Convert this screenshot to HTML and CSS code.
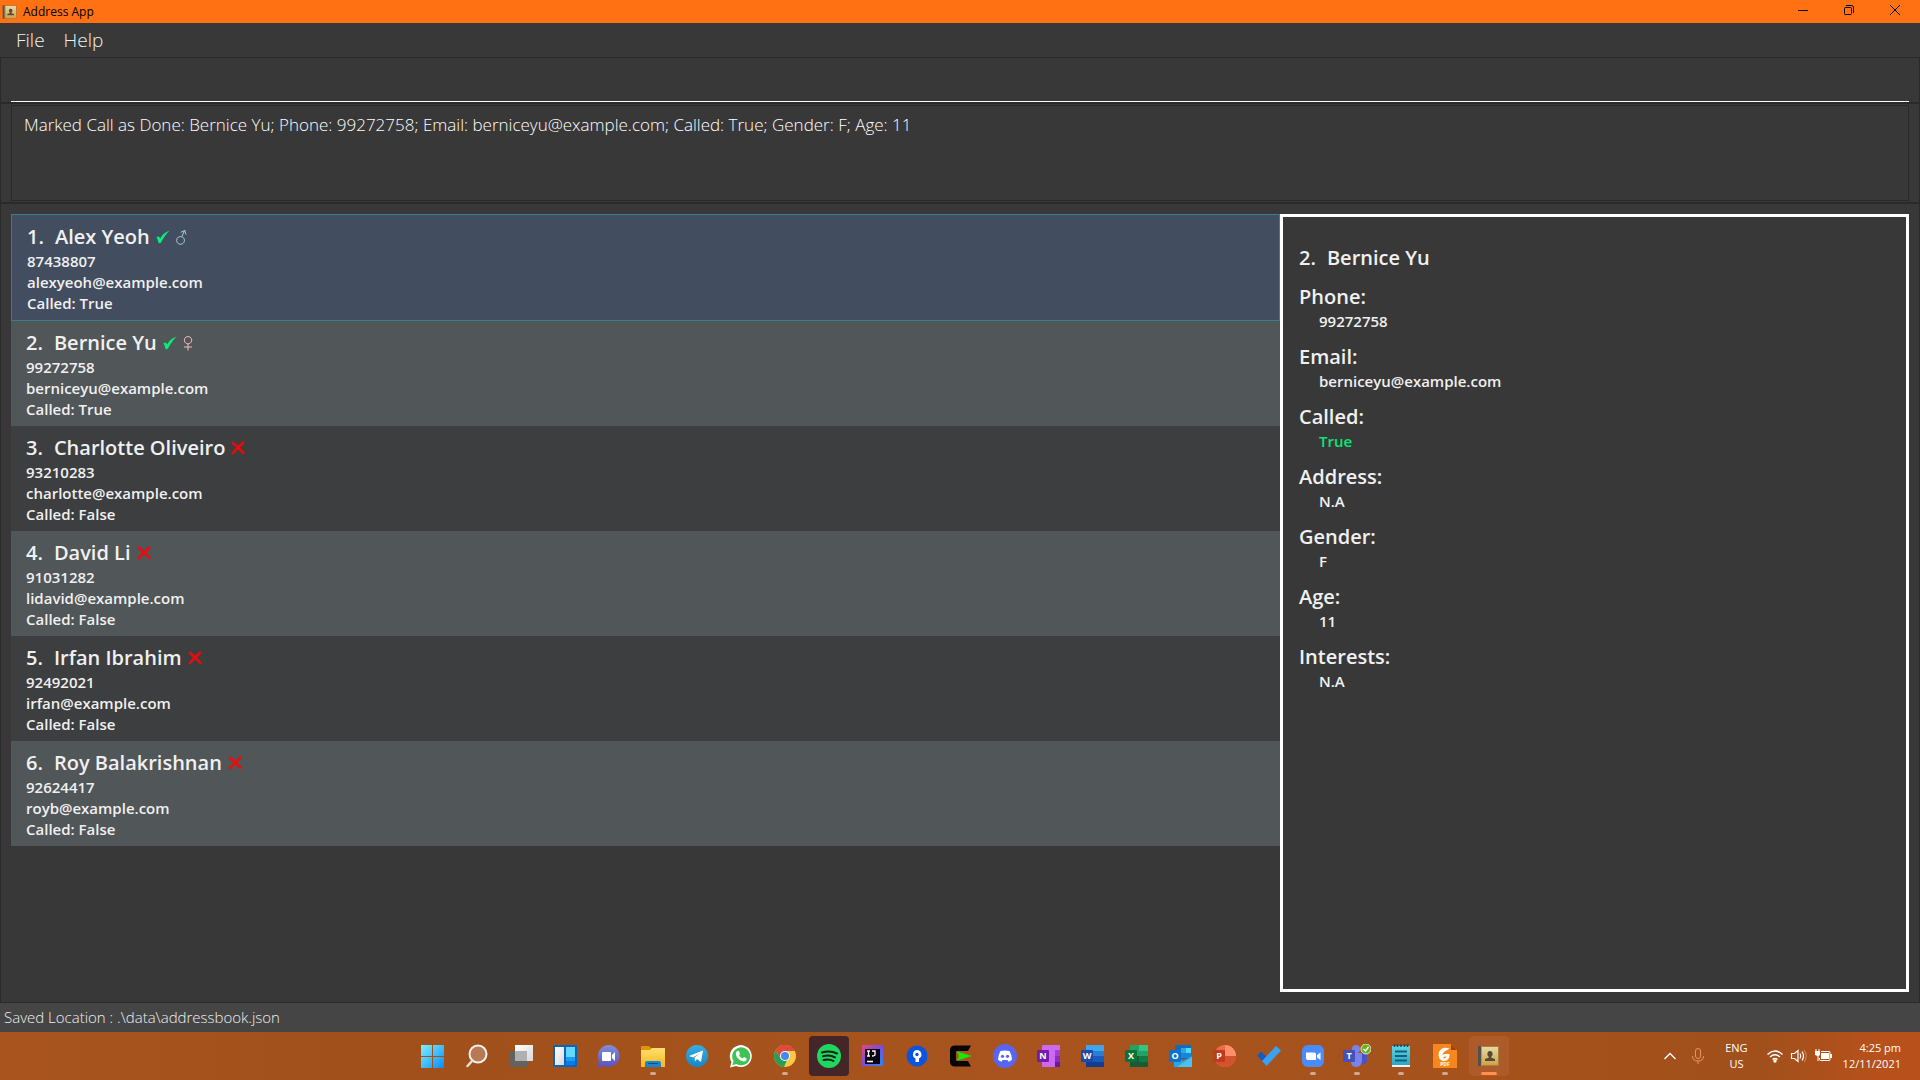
FILE: index.html
```html
<!DOCTYPE html>
<html lang="en">
<head>
<meta charset="utf-8">
<meta name="viewport" content="width=device-width, initial-scale=1">
<title>Address App</title>
<link rel="stylesheet" href="styles.css">
</head>
<body>
<svg class="defs" aria-hidden="true">
  <defs>
    <linearGradient id="win" x2="1" y2="1"><stop stop-color="#7df0ff"/><stop offset="1" stop-color="#0a8cf5"/></linearGradient>
    <linearGradient id="chat" x2="0" y2="1"><stop stop-color="#7f8fd8"/><stop offset="1" stop-color="#5b4fc0"/></linearGradient>
    <linearGradient id="folder" x2="0" y2="1"><stop stop-color="#ffdf70"/><stop offset="1" stop-color="#f8b81c"/></linearGradient>
    <linearGradient id="tele" x2="0" y2="1"><stop stop-color="#37aee2"/><stop offset="1" stop-color="#1688c4"/></linearGradient>
    <linearGradient id="front" x2="1" y2="1"><stop stop-color="#fff"/><stop offset="1" stop-color="#d8d8d8"/></linearGradient>
    <linearGradient id="book" x2="0" y2="1"><stop stop-color="#e8d7a4"/><stop offset="1" stop-color="#d0a248"/></linearGradient>
    <linearGradient id="ij" x2="1" y2="1"><stop stop-color="#e8447c"/><stop offset=".5" stop-color="#7a4de0"/><stop offset="1" stop-color="#1f8cf5"/></linearGradient>
    <linearGradient id="pad" x2="0" y2="1"><stop stop-color="#5fd6e4"/><stop offset="1" stop-color="#2aa6c4"/></linearGradient>
    <symbol id="icon-book" viewBox="0 0 24 24"><path d="M3 2h19v20H3z" fill="#a5803a"/><path d="M5 3h16v18H5z" fill="url(#book)"/><path d="M1 2h3v20H1z" fill="#55504a"/><path d="M4 2h1v20H4z" fill="#9b978c"/><path d="M13 7c1.700 0 2.600 1.200 2.600 3 0 1.300-.6 2.200-1.300 2.700v1l3.700 1.300v2H8v-2l3.700-1.300v-1c-.7-.5-1.300-1.400-1.300-2.700 0-1.800.9-3 2.600-3z" fill="#54493a"/></symbol>
    <symbol id="icon-tick" viewBox="0 0 14 14"><path d="M.5 7.500C1.800 6 3.400 6.400 4.200 8.600 6 5 9 2 13.500.5 10 4 7.300 8 5 12.600c-.9.800-2 .700-2.600 0C2 10.500 1.400 8.700.5 7.500z" fill="#08ee7c"/></symbol>
    <symbol id="icon-cross" viewBox="0 0 14 14"><path d="M1 1.200C5 4 9 8 13 12.600M13 1C9 4.500 5 8.500 1 13" fill="none" stroke="#f20808" stroke-width="2.400"/></symbol>
    <symbol id="icon-male" viewBox="0 0 12 16"><path d="M5.500 7.500a3.900 3.900 0 1 0 .1 0zM6.800 7.600 9.600 1.500M5.800 3.300 9.800 1.400 11 5.500" fill="none" stroke="#a9cdd6"/></symbol>
    <symbol id="icon-female" viewBox="0 0 12 16"><path d="M6 1.500a3.700 3.700 0 1 0 .1 0zM6 9v6.500M2 12h8" fill="none" stroke="#f3b9c2"/></symbol>
  </defs>
</svg>

<header class="titlebar">
  <svg class="app-icon" aria-hidden="true"><use href="#icon-book"/></svg>
  <h1 class="window-title">Address App</h1>
  <div class="window-controls">
    <button class="window-button" aria-label="Minimize"><svg width="12" height="12" viewBox="0 0 12 12"><path d="M1 6.500h10" stroke="#000"/></svg></button>
    <button class="window-button" aria-label="Restore"><svg width="12" height="12" viewBox="0 0 12 12"><rect x="1.500" y="3.500" width="7" height="7" rx="1" fill="none" stroke="#000"/><path d="M3 1.500h5.500a2 2 0 0 1 2 2V9" fill="none" stroke="#000"/></svg></button>
    <button class="window-button" aria-label="Close"><svg width="12" height="12" viewBox="0 0 12 12"><path d="M1 1l10 10M11 1 1 11" stroke="#000"/></svg></button>
  </div>
</header>

<nav class="menubar" aria-label="Main menu">
  <button class="menu-item">File</button>
  <button class="menu-item">Help</button>
</nav>

<form class="pane command-pane">
  <input class="command-box" type="text" aria-label="Command">
</form>

<section class="pane result-pane">
  <output class="result">Marked Call as Done: Bernice Yu; Phone: 99272758; Email: berniceyu@example.com; Called: True; Gender: F; Age: 11</output>
</section>

<main class="pane content">
  <ul class="people">
    <li class="person selected">
      <h2 class="name"><span class="index">1.</span>Alex Yeoh<svg class="mark" role="img" aria-label="Called"><use href="#icon-tick"/></svg><svg class="sex" role="img" aria-label="Male"><use href="#icon-male"/></svg></h2>
      <p>87438807</p><p>alexyeoh@example.com</p><p>Called: True</p>
    </li>
    <li class="person">
      <h2 class="name"><span class="index">2.</span>Bernice Yu<svg class="mark" role="img" aria-label="Called"><use href="#icon-tick"/></svg><svg class="sex" role="img" aria-label="Female"><use href="#icon-female"/></svg></h2>
      <p>99272758</p><p>berniceyu@example.com</p><p>Called: True</p>
    </li>
    <li class="person">
      <h2 class="name"><span class="index">3.</span>Charlotte Oliveiro<svg class="mark" role="img" aria-label="Not called"><use href="#icon-cross"/></svg></h2>
      <p>93210283</p><p>charlotte@example.com</p><p>Called: False</p>
    </li>
    <li class="person">
      <h2 class="name"><span class="index">4.</span>David Li<svg class="mark" role="img" aria-label="Not called"><use href="#icon-cross"/></svg></h2>
      <p>91031282</p><p>lidavid@example.com</p><p>Called: False</p>
    </li>
    <li class="person">
      <h2 class="name"><span class="index">5.</span>Irfan Ibrahim<svg class="mark" role="img" aria-label="Not called"><use href="#icon-cross"/></svg></h2>
      <p>92492021</p><p>irfan@example.com</p><p>Called: False</p>
    </li>
    <li class="person">
      <h2 class="name"><span class="index">6.</span>Roy Balakrishnan<svg class="mark" role="img" aria-label="Not called"><use href="#icon-cross"/></svg></h2>
      <p>92624417</p><p>royb@example.com</p><p>Called: False</p>
    </li>
  </ul>
  <article class="details">
    <h2 class="name"><span class="index">2.</span>Bernice Yu</h2>
    <dl class="fields">
      <div><dt>Phone:</dt><dd>99272758</dd></div>
      <div><dt>Email:</dt><dd>berniceyu@example.com</dd></div>
      <div><dt>Called:</dt><dd class="yes">True</dd></div>
      <div><dt>Address:</dt><dd>N.A</dd></div>
      <div><dt>Gender:</dt><dd>F</dd></div>
      <div><dt>Age:</dt><dd>11</dd></div>
      <div><dt>Interests:</dt><dd>N.A</dd></div>
    </dl>
  </article>
</main>

<div class="statusbar">Saved Location : .\data\addressbook.json</div>

<footer class="taskbar">
  <div class="apps">
    <button class="app" aria-label="Start"><svg viewBox="0 0 24 24"><path d="M0 1h11v11H0zM12 1h11v11H12zM0 13h11v11H0zM12 13h11v11H12z" fill="url(#win)"/></svg></button>
    <button class="app" aria-label="Search"><svg viewBox="0 0 24 24"><circle cx="13" cy="10" r="8.500" fill="#b87955" stroke="#f3f1f0" stroke-width="2"/><path d="M7.500 16.500 2.500 22" stroke="#e5dfdc" stroke-width="2.500" stroke-linecap="round"/></svg></button>
    <button class="app" aria-label="Task View"><svg viewBox="0 0 24 24"><path d="M6 1h18v16H6z" fill="url(#front)"/><path d="M0 7h18v16H0z" fill="#626262"/><path d="M6 7h12v10H6z" fill="#b0b0b0"/></svg></button>
    <button class="app" aria-label="Widgets"><svg viewBox="0 0 24 24"><rect y="1" width="24" height="22" rx="1" fill="#0a64bd"/><path d="M2 3h9v18H2z" fill="url(#front)"/><path d="M13 3h9v10h-9z" fill="#63d8ff"/><path d="M13 13h9v4h-9z" fill="#1b9df4"/><path d="M13 17h9v4h-9z" fill="#0a7de8"/></svg></button>
    <button class="app" aria-label="Chat"><svg viewBox="0 0 24 24"><path d="M12 1a11 11 0 1 1-5 21L.5 23.500 2 17A11 11 0 0 1 12 1z" fill="url(#chat)"/><rect x="5" y="8" width="9" height="9" rx="1" fill="#fff"/><path d="M15 11l3-3v9l-3-3z" fill="#fff"/></svg></button>
    <button class="app running" aria-label="File Explorer"><svg viewBox="0 0 24 24"><path d="M0 3q0-1 1-1h7l3 3v6H0z" fill="#d99808"/><path d="M0 6h9l2-2h13v19H0z" fill="url(#folder)"/><path d="M4 23v-4q0-2 2-2h12q2 0 2 2v4z" fill="#1786d0"/><path d="M7 19.500h10" stroke="#0a4a90"/></svg></button>
    <button class="app" aria-label="Telegram"><svg viewBox="0 0 24 24"><circle cx="12" cy="12" r="11" fill="url(#tele)"/><path d="M4 12 18 6.500 16 18l-4-3-2 2.500-.5-4L15 9l-7 4.500z" fill="#fff"/></svg></button>
    <button class="app" aria-label="WhatsApp"><svg viewBox="0 0 24 24"><path d="M1 23.500 2.500 18A11 11 0 1 1 7 22z" fill="#fff"/><path d="M3.300 21.200 4.500 17A9 9 0 1 1 7.500 20z" fill="#3fc254"/><path d="M8 7h2l1 3-1 1.200q1.500 2.500 3.500 3.200L15 13l2.700 1.400q0 3-3.200 3Q8 16 6.800 10 7 8 8 7z" fill="#fff"/></svg></button>
    <button class="app running" aria-label="Chrome"><svg viewBox="0 0 24 24"><circle cx="12" cy="12" r="11" fill="#fcc944"/><path d="M2.500 6.500A11 11 0 0 1 22 7H12l-4 8z" fill="#de4b3d"/><path d="M2.500 6.500 8 15l6 1-3 7A11 11 0 0 1 2.500 6.500z" fill="#27a055"/><circle cx="12" cy="12" r="5" fill="#fff"/><circle cx="12" cy="12" r="4" fill="#4587f3"/></svg></button>
    <button class="app open" aria-label="Spotify"><svg viewBox="0 0 24 24"><circle cx="12" cy="12" r="12" fill="#1ed760"/><path d="M5 8.500q8-2.500 15 1M6 12.300q6.500-2 12 1M6.500 16q5.500-1.500 10 1" fill="none" stroke="#172018" stroke-width="2" stroke-linecap="round"/></svg></button>
    <button class="app" aria-label="IntelliJ IDEA"><svg viewBox="0 0 24 24"><path d="M1 1h21v21H1z" fill="url(#ij)"/><path d="M4 5h15v15H4z" fill="#0b0310"/><path d="M6 7h3M7.500 7v5M6 12h3M11 7h3v3.500q0 1.500-3 1.500M6 17.500h6" fill="none" stroke="#fff" stroke-width="1.300"/></svg></button>
    <button class="app" aria-label="Sourcetree"><svg viewBox="0 0 24 24"><circle cx="12" cy="12" r="10.500" fill="#0a54e0"/><path d="M12 6a4.500 4.500 0 0 1 2 8.500V18h-3.500v-3.500A4.500 4.500 0 0 1 12 6z" fill="#fff"/><circle cx="12" cy="10.500" r="1.700" fill="#0a54e0"/></svg></button>
    <button class="app" aria-label="Cmd"><svg viewBox="0 0 24 24"><path d="M22 1.500 19 7H8q-1 0-1 1v8q0 1 1 1h11l3 5.500H6q-5 0-5-5V6.500q0-5 5-5z" fill="#070707"/><path d="M8 7.500 23 12 8 16.500 10 12z" fill="#16e80c"/></svg></button>
    <button class="app" aria-label="Discord"><svg viewBox="0 0 24 24"><circle cx="12" cy="12" r="12" fill="#5865f2"/><path d="M7.500 7Q12 5.800 16.500 7 19 11 19 16l-3.500 1.800-1-1.800h-5l-1 1.800L5 16q0-5 2.500-9z" fill="#fff"/><circle cx="9.500" cy="12.300" r="1.600" fill="#5865f2"/><circle cx="14.500" cy="12.300" r="1.600" fill="#5865f2"/></svg></button>
    <button class="app" aria-label="OneNote"><svg viewBox="0 0 24 24"><rect x="5" y="1" width="18" height="22" rx="1" fill="#cb6af0"/><path d="M18 6h5v6h-5z" fill="#a93bd6"/><path d="M18 12h5v6h-5z" fill="#8a2dbd"/><path d="M18 18h5v5h-5z" fill="#6d18a0"/><rect y="6" width="12" height="12" rx="1" fill="#7719aa"/><text x="6" y="15" class="letter">N</text></svg></button>
    <button class="app" aria-label="Word"><svg viewBox="0 0 24 24"><path d="M5 1h18v6H5z" fill="#41a5ee"/><path d="M5 7h18v5H5z" fill="#2b7cd3"/><path d="M5 12h18v6H5z" fill="#185abd"/><path d="M5 18h18v5H5z" fill="#103f91"/><rect y="6" width="12" height="12" rx="1" fill="#164cab"/><text x="6" y="15" class="letter">W</text></svg></button>
    <button class="app" aria-label="Excel"><svg viewBox="0 0 24 24"><path d="M5 1h9v11H5z" fill="#21a366"/><path d="M14 1h9v6h-9z" fill="#33c481"/><path d="M14 7h9v5h-9z" fill="#21a366"/><path d="M5 12h18v11H5z" fill="#185c37"/><path d="M14 12h9v6h-9z" fill="#107c41"/><rect y="6" width="12" height="12" rx="1" fill="#0f7038"/><text x="6" y="15" class="letter">X</text></svg></button>
    <button class="app" aria-label="Outlook"><svg viewBox="0 0 24 24"><path d="M6 1h16v14H6z" fill="#0a6fc0"/><path d="M12 4h5v5h-5z" fill="#2fa4ee"/><path d="M17 4h5v5h-5z" fill="#50d9ff"/><path d="M12 9h10v5H12z" fill="#1488d8"/><path d="M5 12 14 17 23 12v11H5z" fill="#28a8ea"/><path d="M8 23 23 13v10z" fill="#49c1f4"/><rect y="6" width="12" height="12" rx="1" fill="#0a72c8"/><text x="6" y="15" class="letter">O</text></svg></button>
    <button class="app" aria-label="PowerPoint"><svg viewBox="0 0 24 24"><circle cx="12" cy="12" r="11" fill="#ed6c47"/><path d="M12 1a11 11 0 0 1 11 11H12z" fill="#ff8f6b"/><path d="M1 12h22a11 11 0 0 1-22 0z" fill="#d35230"/><rect y="6" width="12" height="12" rx="1" fill="#c03b1c"/><text x="6" y="15" class="letter">P</text></svg></button>
    <button class="app" aria-label="To Do"><svg viewBox="0 0 24 24"><path d="M0 11.500 4 7.500 12 15l-4 5z" fill="#195abd"/><path d="M5 17 19 2l5 4.500L9.500 22z" fill="#3ba0f0"/></svg></button>
    <button class="app running" aria-label="Zoom"><svg viewBox="0 0 24 24"><rect x="1" y="1" width="22" height="22" rx="6" fill="#4a8cff"/><path d="M5 8.500h8q2 0 2 2V16H7q-2 0-2-2zM16 11l3.500-2.500V16L16 13.500z" fill="#fff"/></svg></button>
    <button class="app running" aria-label="Teams"><svg class="wide" viewBox="0 0 28 24"><circle cx="13" cy="5" r="4" fill="#7b83eb"/><path d="M17 9h7v8q-1 4-6 3z" fill="#4a52c4"/><path d="M8 9h11v8q-1 6-6 6-5-.5-5-5z" fill="#7b83eb"/><rect y="6" width="12" height="12" rx="1" fill="#4550bb"/><text x="6" y="15" class="letter">T</text><circle cx="23" cy="5" r="5" fill="#6bb11c" stroke="#dfe8cf"/><path d="m20.500 5 2 2 3-4" fill="none" stroke="#fff" stroke-width="1.300"/></svg></button>
    <button class="app running" aria-label="Notepad"><svg viewBox="0 0 24 24"><path d="M3 2h18v19H3z" fill="url(#pad)"/><path d="M3 21h18v2H3z" fill="#f0f0f0"/><path d="M5.500 0v3M8.500 0v3M12 0v3M15.500 0v3M18.500 0v3" stroke="#164f66" stroke-width="1.500"/><path d="M6 7.500h12M6 12h12M6 16.500h12" stroke="#125e7d" stroke-width="2"/></svg></button>
    <button class="app running" aria-label="PDF Reader"><svg viewBox="0 0 24 24"><path d="M0 0h18l6 6v18H0z" fill="#f7861d"/><path d="M18 0v6h6z" fill="#9c4208"/><path d="M16.500 4.500Q9 2 6 8q-2 7 4 9 7 .5 6.500-7H12q-2.500 0-2.500 3 2 0 4-.7-.8 2.700-2.800 1.700-2.700-2.500.3-6 2.500-2 5.500-3.500z" fill="#fff"/><text x="12" y="22" class="tiny">PDF</text></svg></button>
    <button class="app current" aria-label="Address App"><svg viewBox="0 0 24 24"><use href="#icon-book"/></svg></button>
  </div>
  <div class="tray">
    <button class="tray-button" aria-label="Show hidden icons"><svg width="14" height="14" viewBox="0 0 14 14"><path d="m1.500 10 5.500-5.500 5.500 5.500" fill="none" stroke="#fff" stroke-width="1.300"/></svg></button>
    <button class="tray-button mic" aria-label="Microphone"><svg width="14" height="18" viewBox="0 0 14 18"><rect x="4.500" y="1.500" width="5" height="10" rx="2.500" fill="none" stroke="#ee945f"/><path d="M1.500 9q0 5 5.500 5t5.500-5M7 14v3" fill="none" stroke="#ee945f"/></svg></button>
    <button class="tray-button language">ENG<br>US</button>
    <button class="tray-button system" aria-label="Network, volume and battery">
      <svg width="18" height="16" viewBox="0 0 18 16"><path d="M1.500 6.500q7.500-7 15 0M4 9q5-4.500 10 0M6.500 11.500q2.500-2 5 0" fill="none" stroke="#fff" stroke-width="1.400"/><circle cx="9" cy="13" r="1.700" fill="#fff"/></svg>
      <svg width="18" height="16" viewBox="0 0 18 16"><path d="M1.500 5.500h3L8 2.500v11l-3.500-3h-3z" fill="none" stroke="#fff" stroke-width="1.200"/><path d="M10 5.500q1.500 2.500 0 5M12 3.500q3 4.500 0 9" fill="none" stroke="#fff" stroke-width="1.200"/><path d="M14.200 2q4 6 0 12" fill="none" stroke="#cf8d69"/></svg>
      <svg width="18" height="16" viewBox="0 0 18 16"><path d="M7 3.500h8q1 0 1 1v7q0 1-1 1H6.500q-1 0-1-1V10" fill="none" stroke="#fff"/><path d="M7 5h8v6H7zM16 6h2v4h-2zM1 3h5v4L4.500 8v5h-1V8L1 7zM1.500 1h1v2h-1zM4.500 1h1v2h-1z" fill="#fff"/></svg>
    </button>
    <button class="tray-button clock">4:25 pm<br>12/11/2021</button>
  </div>
</footer>
</body>
</html>
```

FILE: styles.css
```css
* {
  box-sizing: border-box;
}

body {
  margin: 0;
  min-height: 100vh;
  display: flex;
  flex-direction: column;
  background: #383838;
  color: #f0f0f0;
  font-family: "Open Sans", "Noto Sans", sans-serif;
}

button {
  border: 0;
  padding: 0;
  background: none;
  color: inherit;
  font: inherit;
}

h1, h2, p, ul, dl, dd {
  margin: 0;
  padding: 0;
}

svg {
  display: block;
}

.defs {
  position: absolute;
  width: 0;
  height: 0;
}

/* Window frame */
.titlebar {
  display: flex;
  align-items: center;
  height: 23px;
  padding-left: 2px;
  background: #ff7112;
  color: #000;
}

.app-icon {
  width: 16px;
  height: 16px;
}

.window-title {
  margin-left: 5px;
  font-size: 12px;
  font-weight: 400;
  line-height: 22px;
}

.window-controls {
  display: flex;
  align-self: flex-start;
  margin-left: auto;
  margin-right: 2px;
}

.window-button {
  display: grid;
  place-items: center;
  width: 46px;
  height: 20px;
}

.menubar {
  display: flex;
  gap: 19px;
  height: 34px;
  padding: 0 16px;
  font-size: 19px;
  font-weight: 300;
  line-height: 34px;
}

/* Stacked panes */
.pane {
  border: 1px solid #2a2a2a;
  padding: 0 10px;
}

.command-pane {
  display: flex;
  height: 46px;
}

.command-box {
  flex: 1;
  min-width: 0;
  border: 0;
  border-bottom: 1px solid #fff;
  outline: 0;
  padding: 0 4px;
  background: transparent;
  color: #fff;
  font: 300 17px "Open Sans", sans-serif;
}

.result-pane {
  display: flex;
  height: 100px;
  padding-top: 1px;
  padding-bottom: 1px;
}

.result {
  flex: 1;
  border: 1px solid #2a2a2a;
  padding: 7px 12px;
  color: #fff;
  font-size: 17px;
  font-weight: 300;
  line-height: 23px;
}

.content {
  flex: 1;
  display: grid;
  grid-template-columns: minmax(0, 1269fr) minmax(0, 629fr);
  padding-top: 10px;
  padding-bottom: 10px;
}

/* Contact list */
.people {
  list-style: none;
}

.person {
  padding: 8px 15px 6px;
  background: #3c3e3f;
  font-size: 15px;
  font-weight: 600;
  line-height: 21px;
}

.person:nth-child(even) {
  background: #515658;
}

.person.selected {
  border: 1px solid #3e7b91;
  background: #424d5f;
}

.name {
  display: flex;
  align-items: center;
  height: 27px;
  margin-bottom: 1px;
  font-size: 20px;
  font-weight: 600;
  line-height: 27px;
}

.index {
  margin-right: 11px;
}

.mark {
  width: 14px;
  height: 14px;
  margin-left: 6px;
}

.sex {
  width: 12px;
  height: 16px;
  margin-left: 5px;
}

/* Selected contact */
.details {
  border: 3px solid #fff;
  padding: 27px 16px;
}

.fields {
  display: grid;
  gap: 11px;
  margin-top: 12px;
}

.fields dt {
  margin-bottom: 1px;
  font-size: 20px;
  font-weight: 600;
  line-height: 27px;
}

.fields dd {
  padding-left: 20px;
  font-size: 15px;
  font-weight: 600;
  line-height: 21px;
}

.fields .yes {
  color: #08e676;
}

.statusbar {
  height: 29px;
  padding: 0 4px;
  background: #454545;
  font-size: 15px;
  font-weight: 300;
  line-height: 29px;
}

/* Desktop taskbar */
.taskbar {
  display: grid;
  grid-template-columns: minmax(0, 1fr) auto minmax(0, 1fr);
  align-items: center;
  height: 48px;
  padding-left: 2px;
  background: linear-gradient(90deg, #a9541f, #a1501b 20%, #a9541e 55%, #a2501b 92%, #b8501b 98%);
}

.apps {
  grid-column: 2;
  display: flex;
  gap: 4px;
}

.app {
  position: relative;
  display: grid;
  place-items: center;
  width: 40px;
  height: 40px;
  border-radius: 4px;
}

.app svg {
  width: 24px;
  height: 24px;
}

.app svg.wide {
  width: 28px;
}

.app.open {
  background: #452628;
}

.app.current {
  background: #ae5b2b;
}

.app.running::after,
.app.current::after {
  content: "";
  position: absolute;
  bottom: 1px;
  left: 17px;
  width: 6px;
  height: 3px;
  border-radius: 2px;
  background: #d3a88f;
}

.app.current::after {
  left: 12px;
  width: 16px;
  background: #ff914d;
}

.letter {
  fill: #fff;
  font: 700 9px "Open Sans", sans-serif;
  text-anchor: middle;
}

.tiny {
  fill: #fff;
  font: 700 5px "Open Sans", sans-serif;
  text-anchor: middle;
}

.tray {
  display: flex;
  justify-content: flex-end;
  align-items: center;
  padding-right: 19px;
  color: #fff;
  font-size: 11px;
  line-height: 16px;
}

.mic {
  margin-left: 14px;
}

.language {
  margin-left: 20px;
}

.system {
  display: flex;
  gap: 6px;
  margin-left: 18px;
}

.clock {
  margin-left: 11px;
  text-align: right;
}
```
